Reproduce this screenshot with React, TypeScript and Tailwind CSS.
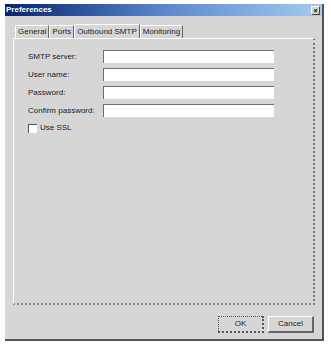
const font = { fontFamily: '"Liberation Sans", Arial, sans-serif' }

function Field({ label }: { label: string }) {
  return (
    <div className="flex items-center h-[13px] mb-[5px]">
      <span className="w-[75px] text-[8px] text-[#222]">{label}</span>
      <div className="w-[171px] h-[13px] bg-white border-t border-l border-[#707070]" />
    </div>
  )
}

function Tab({ label, active }: { label: string; active?: boolean }) {
  return (
    <div
      className={
        active
          ? 'h-[15px] px-[2px] -mb-px mt-[-1px] flex items-center text-[8px] text-[#222] bg-[#d6d6d6] border-t border-l border-white border-r border-r-[#666] border-b border-b-[#d6d6d6]'
          : 'h-[13px] px-[2px] flex items-center text-[8px] text-[#222] border-t border-l border-white border-r border-r-[#666]'
      }
    >
      {label}
    </div>
  )
}

export default function App() {
  return (
    <div className="w-[331px] h-[345px] bg-white pl-[5px] pt-[4px]" style={font}>
      <div className="w-[319px] h-[337px] bg-[#d6d6d6] border-r-2 border-b-2 border-[#555] flex flex-col">
        <div className="h-[12px] flex items-center justify-between pl-[1px] pr-[2px] bg-gradient-to-r from-[#0a246a] via-[#5a88cc] to-[#a6caf0]">
          <span className="text-[8px] font-bold text-white leading-none">Preferences</span>
          <div className="w-[9px] h-[9px] bg-[#d6d6d6] border-t border-l border-white border-r border-b border-r-[#444] border-b-[#444] flex items-center justify-center text-[7px] leading-none font-bold text-black">
            ×
          </div>
        </div>
        <div className="flex pl-[10px] mt-[9px] items-end">
          <Tab label="General" />
          <Tab label="Ports" />
          <Tab label="Outbound SMTP" active />
          <Tab label="Monitoring" />
        </div>
        <div className="ml-[8px] w-[302px] h-[267px] border-t border-l border-white border-r-2 border-b-2 border-r-[#777] border-b-[#888] border-dotted [border-top-style:solid] [border-left-style:solid] pt-[11px] pl-[14px]">
          <Field label="SMTP server:" />
          <Field label="User name:" />
          <Field label="Password:" />
          <Field label="Confirm password:" />
          <label className="flex items-center gap-[3px] mt-[2px] text-[8px] text-[#222]">
            <span className="w-[9px] h-[9px] bg-white border-t border-l border-[#555]" />
            Use SSL
          </label>
        </div>
        <div className="flex justify-end gap-[4px] pr-[8px] mt-[11px]">
          <button className="w-[46px] h-[17px] text-[8px] text-[#222] border border-dotted border-[#555] border-b-2 border-r-2">
            OK
          </button>
          <button className="w-[46px] h-[17px] text-[8px] text-[#222] border-t border-l border-white border-r-2 border-b-2 border-r-[#666] border-b-[#666]">
            Cancel
          </button>
        </div>
      </div>
    </div>
  )
}
